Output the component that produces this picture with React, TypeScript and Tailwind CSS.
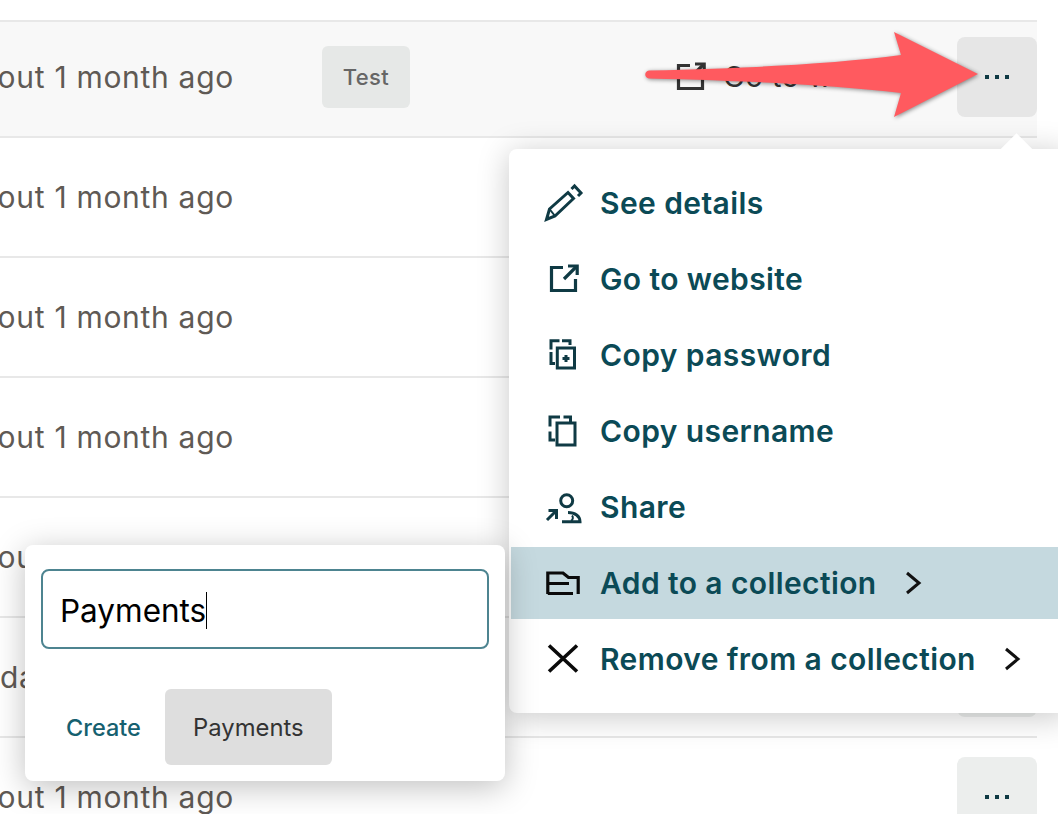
const rows = ['about 1 month ago', 'about 1 month ago', 'about 1 month ago', 'about 1 month ago', 'about 1 month ago', 'day ago', 'about 1 month ago'];

function Dots() {
  return (
    <div className="flex gap-[6px]">
      <div className="w-[4px] h-[4px] bg-[#0f3a44]" />
      <div className="w-[4px] h-[4px] bg-[#0f3a44]" />
      <div className="w-[4px] h-[4px] bg-[#0f3a44]" />
    </div>
  );
}

function ExternalIcon({ className }: { className: string }) {
  return (
    <svg viewBox="0 0 40 40" fill="none" stroke="currentColor" strokeWidth="3.2" className={className}>
      <path d="M19 8.5H7.5V31.5H31.5V20" />
      <path d="M20 20L32 8" />
      <path d="M24 7H33.2V16" />
    </svg>
  );
}

function Chevron() {
  return (
    <svg viewBox="0 0 18 24" fill="none" stroke="#111" strokeWidth="3" className="w-[18px] h-[24px]">
      <path d="M3 2L15 12L3 22" />
    </svg>
  );
}

const icons = [
  <svg viewBox="0 0 40 40" fill="none" stroke="#0f3a44" strokeWidth="3" className="w-10 h-10">
    <path d="M2.5 36.5L5.5 26L24 9.5L29.5 15.5L11 33Z" />
    <path d="M5.5 26L11 33" strokeWidth="2" />
    <path d="M27.5 6L30.5 3L37 10L34 13" />
  </svg>,
  <ExternalIcon className="w-10 h-10 text-[#0f3a44]" />,
  <svg viewBox="0 0 40 40" fill="none" stroke="#0f3a44" strokeWidth="3" className="w-10 h-10">
    <path d="M15.5 5.7H7V14.5M18 5.7H26V10M7 17V28.5H11" />
    <path d="M13.3 13H30.5V33H13.3Z" />
    <path d="M22 20V27M18.5 23.5H25.5" />
  </svg>,
  <svg viewBox="0 0 40 40" fill="none" stroke="#0f3a44" strokeWidth="3" className="w-10 h-10">
    <path d="M16 6H6V15.5M19.5 6H26.5V11M6 20.5V29H11" />
    <path d="M13 12H31V34H13Z" />
  </svg>,
  <svg viewBox="0 0 40 40" fill="none" stroke="#0f3a44" strokeWidth="3" className="w-10 h-10">
    <circle cx="22.7" cy="13.7" r="6" />
    <path d="M3 33L12.5 23.5M4.5 23.5H12.5V32" />
    <path d="M18 34.7H36C36 29 31 25.5 24 25.5" />
    <path d="M28 28.5C29.5 30 29 33 27 34" strokeWidth="2" />
  </svg>,
  <svg viewBox="0 0 40 40" fill="none" stroke="#0a0a0a" strokeWidth="3.2" className="w-10 h-10">
    <path d="M3.8 31V10H19L24.5 14.5H34.2V31" />
    <path d="M3.8 20.5H25M3.8 30.5H29" />
  </svg>,
  <svg viewBox="0 0 40 40" fill="none" stroke="#0a0a0a" strokeWidth="3.6" className="w-10 h-10">
    <path d="M5 6.5L33 32.5M33 6.5L5 32.5" />
  </svg>,
];

const menuItems = ['See details', 'Go to website', 'Copy password', 'Copy username', 'Share', 'Add to a collection', 'Remove from a collection'];

export default function App() {
  return (
    <div className="relative w-[1058px] h-[814px] overflow-hidden bg-white font-['Inter',sans-serif]">
      <div className="w-[1037px] pt-[20px]">
        <div className="border-t-2 border-[#e8e8e8]" />
        {rows.map((text, i) => (
          <div
            key={i}
            className={
              i === 0
                ? 'flex items-center h-[116px] pb-[4px] border-b-2 border-[#e8e8e8] bg-[#f8f8f8]'
                : 'flex items-center h-[120px] border-b-2 border-[#e8e8e8]'
            }
          >
            <div className={i === 5 ? "w-[322px] text-[30px] tracking-[0.7px] text-[#5f5a55] whitespace-nowrap" : "w-[322px] ml-[-39px] mr-[39px] text-[30px] tracking-[0.7px] text-[#5f5a55] whitespace-nowrap"}>
              {text}
            </div>
            {i === 0 && (
              <div className="w-[88px] h-[62px] flex items-center justify-center rounded-md bg-[#e6e8e7] text-[22px] tracking-[0.4px] font-medium text-[#666]">
                Test
              </div>
            )}
            <div className="flex-1" />
            {i === 0 && (
              <div className="flex items-center gap-[12px] mr-[39px] text-[#333]">
                <ExternalIcon className="w-[40px] h-[40px]" />
                <span className="text-[29px] tracking-[0.5px] whitespace-nowrap">Go to website</span>
              </div>
            )}
            <div className={i === 0 ? 'shrink-0 w-[80px] h-[80px] flex items-center justify-center rounded-lg bg-[#e6e6e6]' : 'shrink-0 w-[80px] h-[80px] flex items-center justify-center rounded-lg bg-[#eceeed]'}>
              <Dots />
            </div>
          </div>
        ))}
      </div>

      {/* arrow annotation */}
      <svg viewBox="0 0 1058 140" className="absolute left-0 top-0 w-[1058px] h-[140px] drop-shadow-[1px_1px_2px_rgba(0,0,0,0.45)]">
        <path d="M649 70.5C760 68 840 63 901 55L894 32L978 74L894 117L901 93C840 86 760 81 649 78.5C644 78 644 71 649 70.5Z" fill="#ff5a5f" />
      </svg>

      {/* row menu */}
      <div className="absolute left-[509px] top-[149px] w-[560px] pl-[2px] py-[18px] flex flex-col gap-[4px] rounded-lg bg-white shadow-[0_4px_32px_rgba(0,0,0,0.22)]">
        <div className="absolute right-[41px] top-[-11px] w-[23px] h-[23px] rotate-45 bg-white" />
        {menuItems.map((label, i) => (
          <div key={label} className={i === 5 ? 'relative flex items-center h-[72px] pl-[33px] bg-[#c5d9df]' : 'relative flex items-center h-[72px] pl-[33px]'}>
            {icons[i]}
            <span className="ml-[16px] text-[30px] tracking-[0.4px] font-semibold text-[#0b4a56] whitespace-nowrap">{label}</span>
            {i > 4 && <div className="ml-[27px]"><Chevron /></div>}
          </div>
        ))}
      </div>

      {/* collection popover */}
      <div className="absolute left-[25px] top-[545px] w-[480px] h-[236px] px-[16px] pt-[24px] rounded-lg bg-white shadow-[0_6px_32px_rgba(0,0,0,0.25)]">
        <div className="flex items-center h-[80px] pl-[17px] rounded-lg border-2 border-[#4d8490] text-[31.5px] text-black">
          <span className="pt-[3px]">Payments</span>
          <div className="w-[1px] h-[37px] mt-[3px] bg-black" />
        </div>
        <div className="flex items-center mt-[40px] pl-[25px]">
          <span className="pt-[2px] text-[23.5px] font-medium text-[#15606f]">Create</span>
          <div className="ml-[24px] w-[167px] h-[76px] pt-[2px] flex items-center justify-center rounded-md bg-[#dedede] text-[23.8px] text-[#333]">
            Payments
          </div>
        </div>
      </div>
    </div>
  );
}
